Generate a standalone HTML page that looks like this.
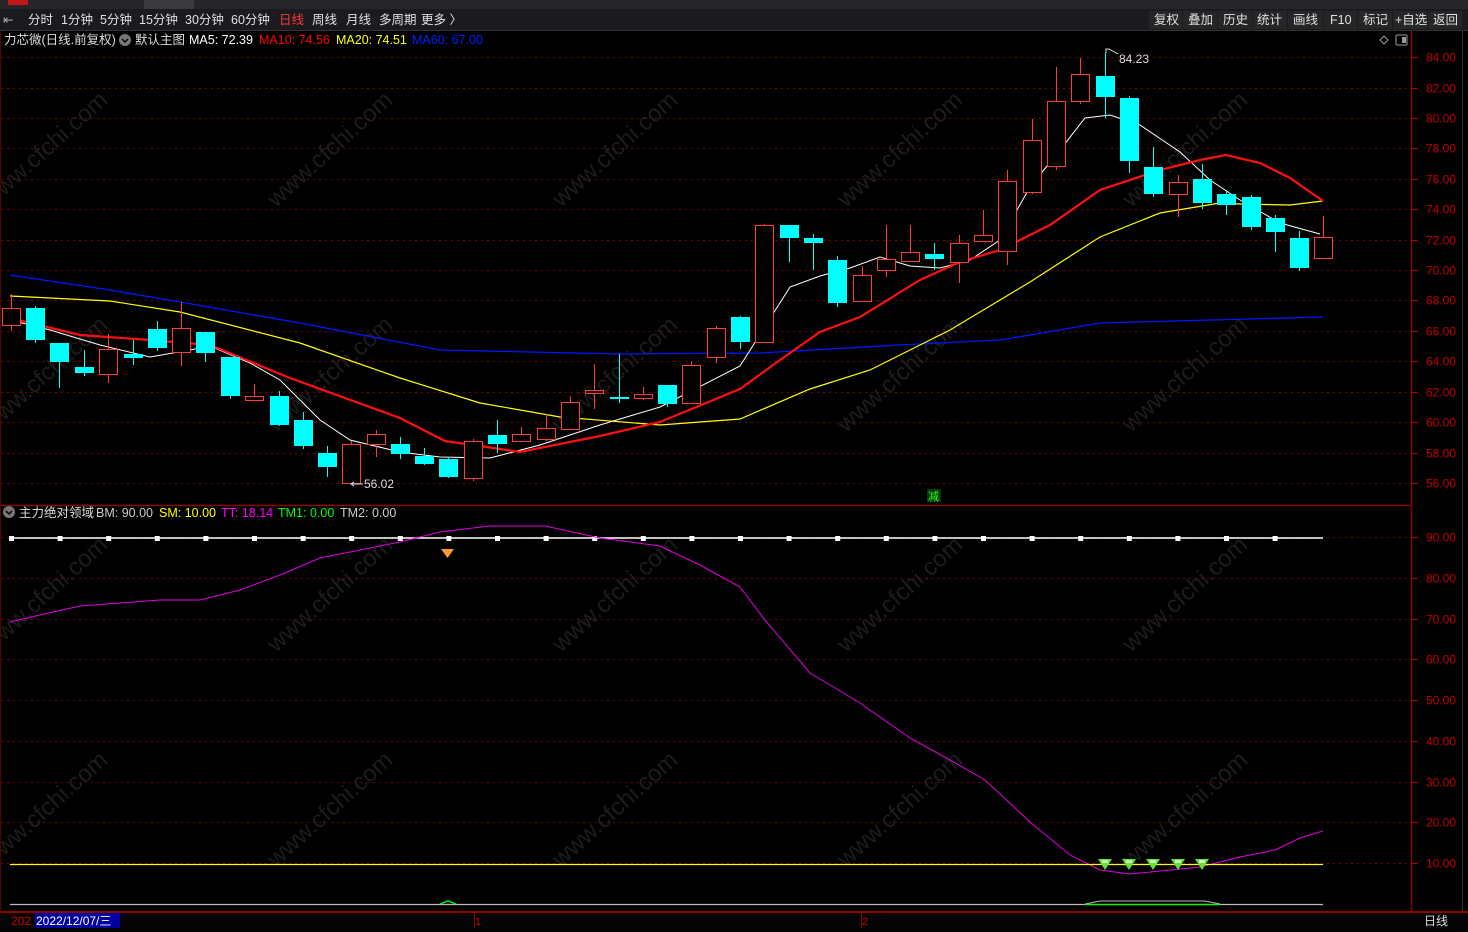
<!DOCTYPE html>
<html><head><meta charset="utf-8"><style>
html,body{margin:0;padding:0;background:#000;width:1468px;height:932px;overflow:hidden;font-family:"Liberation Sans","Noto Sans CJK SC",sans-serif;}
svg text{font-family:"Liberation Sans","Noto Sans CJK SC",sans-serif;}
</style></head><body>
<svg id="s" width="1468" height="932" xmlns="http://www.w3.org/2000/svg">
<rect width="1468" height="932" fill="#000"/>
<g id="wm" font-size="24" fill="#1c1c1c"></g>
<rect x="0" y="0" width="1468" height="9" fill="#26262a"/>
<rect x="8" y="0" width="20" height="5" fill="#c01818"/>
<rect x="144" y="0" width="50" height="9" fill="#3a3a3e"/>
<rect x="0" y="9" width="1468" height="21" fill="#1b1b1f"/>
<g font-size="12.5" fill="#e0e0e0">
<text x="3" y="24" fill="#aaa">⇤</text>
<text x="28" y="24">分时</text><text x="61" y="24">1分钟</text><text x="100" y="24">5分钟</text><text x="139" y="24">15分钟</text><text x="185" y="24">30分钟</text><text x="231" y="24">60分钟</text><text x="279" y="24" fill="#ff3a3a">日线</text><text x="312" y="24">周线</text><text x="346" y="24">月线</text><text x="379" y="24">多周期</text><text x="421" y="24">更多 〉</text>
</g>
<g font-size="12.5" fill="#e0e0e0">
<rect x="1149" y="11" width="33" height="18" fill="#262629"/><text x="1154" y="24">复权</text>
<rect x="1183" y="11" width="34" height="18" fill="#262629"/><text x="1188" y="24">叠加</text>
<rect x="1218" y="11" width="34" height="18" fill="#262629"/><text x="1223" y="24">历史</text>
<rect x="1253" y="11" width="34" height="18" fill="#262629"/><text x="1257" y="24">统计</text>
<rect x="1288" y="11" width="35" height="18" fill="#262629"/><text x="1293" y="24">画线</text>
<rect x="1324" y="11" width="33" height="18" fill="#262629"/><text x="1330" y="24">F10</text>
<rect x="1358" y="11" width="34" height="18" fill="#262629"/><text x="1363" y="24">标记</text>
<rect x="1393" y="11" width="34" height="18" fill="#262629"/><text x="1395" y="24">+自选</text>
<rect x="1428" y="11" width="34" height="18" fill="#262629"/><text x="1433" y="24">返回</text>
</g>
<line x1="0" y1="30.5" x2="1468" y2="30.5" stroke="#333"/>
<g font-size="12.5">
<text x="4" y="44" fill="#ddd">力芯微(日线.前复权)</text>
<circle cx="125" cy="40" r="6" fill="#777"/><path d="M122 39l3 3 3-3" stroke="#000" stroke-width="1.5" fill="none"/>
<text x="135" y="44" fill="#ddd">默认主图</text>
<text x="189" y="44" fill="#fff">MA5: 72.39</text>
<text x="259" y="44" fill="#f00">MA10: 74.56</text>
<text x="336" y="44" fill="#ff0">MA20: 74.51</text>
<text x="412" y="44" fill="#0020ff">MA60: 67.00</text>
</g>
<path d="M1384 36l4 4-4 4-4-4z" stroke="#999" fill="none"/>
<rect x="1396" y="35" width="11" height="10" stroke="#999" fill="none" rx="1"/><rect x="1402" y="37" width="4" height="6" fill="#999"/>
<line x1="1411.5" y1="31" x2="1411.5" y2="912" stroke="#8a0000" stroke-width="1.5"/>
<line x1="1462.5" y1="31" x2="1462.5" y2="932" stroke="#333"/>
<line x1="0" y1="505.5" x2="1411" y2="505.5" stroke="#8a0000" stroke-width="1.5"/>
<line x1="0" y1="912" x2="1468" y2="912" stroke="#8a0000" stroke-width="2"/>
<line x1="0.5" y1="31" x2="0.5" y2="912" stroke="#5a0000"/>
<g id="grid"></g>
<g id="lines" fill="none"></g>
<g id="candles"></g>
<text x="1119" y="63" font-size="12" fill="#ddd">84.23</text>
<path d="M1106 53v-4h3l9 5" stroke="#ddd" fill="none"/>
<text x="364" y="488" font-size="12" fill="#ddd">56.02</text>
<path d="M351 484h12" stroke="#ddd"/><path d="M354 482l-3 2 3 2" stroke="#ddd" fill="none"/>
<rect x="927" y="489" width="14" height="13" fill="#0a3a0a"/><text x="928" y="500" font-size="11" fill="#2f2">减</text>
<g font-size="12.5">
<circle cx="9" cy="512" r="6" fill="#777"/><path d="M6 511l3 3 3-3" stroke="#000" stroke-width="1.5" fill="none"/>
<text x="19" y="517" fill="#ddd">主力绝对领域</text>
<text x="96" y="517" fill="#ccc">BM: 90.00</text>
<text x="159" y="517" fill="#ff0">SM: 10.00</text>
<text x="221" y="517" fill="#f0f">TT: 18.14</text>
<text x="278" y="517" fill="#0f0">TM1: 0.00</text>
<text x="340" y="517" fill="#ccc">TM2: 0.00</text>
</g>
<rect x="0" y="913" width="1468" height="19" fill="#050505"/>
<text x="11" y="925" font-size="12" fill="#c00">202</text>
<rect x="35" y="913" width="85" height="15" fill="#0000a0"/>
<text x="36" y="925" font-size="12" fill="#fff">2022/12/07/三</text>
<line x1="474.5" y1="913" x2="474.5" y2="928" stroke="#800"/><text x="475" y="925" font-size="11" fill="#c00">1</text>
<line x1="861.5" y1="913" x2="861.5" y2="928" stroke="#800"/><text x="862" y="925" font-size="11" fill="#c00">2</text>
<text x="1424" y="925" font-size="12" fill="#ddd">日线</text>
</svg>
<script>
var NS="http://www.w3.org/2000/svg";
function el(p,t,a,txt){var e=document.createElementNS(NS,t);for(var k in a)e.setAttribute(k,a[k]);if(txt)e.textContent=txt;document.getElementById(p).appendChild(e);return e;}
[50,335,620,905,1190].forEach(function(x){[155,380,600,815].forEach(function(y){
el("wm","text",{x:x,y:y,"text-anchor":"middle",transform:"rotate(-42 "+x+" "+y+")"},"www.cfchi.com");});});
for(var p=56;p<=84;p+=2){var y=Math.round(483-(p-56)*15.21)+0.5;
el("grid","line",{x1:1,y1:y,x2:1411,y2:y,stroke:"#7a0000","stroke-dasharray":"2 4"});
el("grid","line",{x1:1411,y1:y,x2:1418,y2:y,stroke:"#a00"});
el("grid","text",{x:1426,y:y+4,"font-size":"12",fill:"#c00000"},p.toFixed(2));}
for(var v=10;v<=90;v+=10){var y=Math.round(863-(v-10)*4.075)+0.5;
el("grid","line",{x1:1,y1:y,x2:1411,y2:y,stroke:"#7a0000","stroke-dasharray":"2 4"});
el("grid","line",{x1:1411,y1:y,x2:1418,y2:y,stroke:"#a00"});
el("grid","text",{x:1426,y:y+4,"font-size":"12",fill:"#c00000"},v.toFixed(2));}
function pl(pts,c,w){el("lines","polyline",{points:pts,stroke:c,"stroke-width":w,fill:"none"});}
pl("10,275 110,290 180,302 300,323 440,350 620,354 760,353 900,345 1000,340 1100,323 1323,317","#0018ff",1.3);
pl("10,296 110,301 180,312 300,343 400,378 480,403 560,417 660,425 740,419 810,389 870,370 950,330 1030,282 1100,237 1160,213 1220,203 1240,204 1290,205 1323,201","#ffff00",1.2);
pl("10,320 50,330 100,345 150,357 190,350 210,346 250,363 280,380 320,420 350,440 400,452 440,457 490,458 540,445 600,425 660,407 740,366 790,287 820,276 850,268 880,257 910,266 940,268 970,260 1000,240 1030,187 1060,150 1085,118 1110,115 1140,125 1180,152 1210,180 1240,200 1280,223 1320,234","#fff",1);
pl("10,318 80,335 150,340 210,345 290,378 400,418 445,441 480,446 520,452 600,436 660,422 740,389 780,360 820,332 860,317 920,280 960,262 1000,250 1050,225 1100,190 1160,170 1200,160 1226,155 1260,163 1290,178 1323,201","#ff1010",2.2);
var C=[[11,308,325,294,331,1],[35,308,340,306,343,0],[59,343,362,343,388,0],[84,367,373,350,376,0],[108,349,374,334,383,1],[133,354,358,340,365,0],[157,329,348,321,351,0],[181,328,352,302,366,1],[205,332,353,332,362,0],[230,357,396,357,399,0],[254,396,400,384,400,1],[279,396,425,391,426,0],[303,420,446,412,449,0],[327,453,467,446,477,0],[351,444,483,441,483,1],[376,434,444,430,457,1],[400,444,454,437,459,0],[424,456,464,448,465,0],[448,459,477,457,478,0],[473,441,478,439,481,1],[497,435,444,420,453,0],[521,434,441,427,441,1],[546,428,439,414,441,1],[570,402,429,396,429,1],[594,390,393,364,409,1],[619,397,399,354,403,0],[643,394,398,387,400,1],[667,385,404,385,407,0],[691,365,403,361,403,1],[716,328,357,326,363,1],[740,317,342,316,349,0],[764,225,342,224,342,1],[789,225,238,225,262,0],[813,238,243,234,270,0],[837,260,303,256,307,0],[862,275,301,266,301,1],[886,259,270,225,277,1],[910,252,261,225,261,1],[934,254,259,243,270,0],[959,243,262,235,283,1],[983,235,241,210,241,1],[1007,181,251,170,265,1],[1032,140,192,119,194,1],[1056,101,166,67,170,1],[1080,74,101,58,104,1],[1105,76,97,53,118,0],[1129,98,161,96,173,0],[1153,167,194,147,197,0],[1178,182,194,175,217,1],[1202,179,203,164,209,0],[1226,194,205,190,215,0],[1251,197,227,195,230,0],[1275,218,232,215,252,0],[1299,238,268,231,271,0],[1323,237,258,216,259,1]];
C.forEach(function(c){var x=c[0],r=c[5];var col=r?"#ff3c3c":"#00ffff";
el("candles","line",{x1:x+0.5,y1:c[3],x2:x+0.5,y2:c[1],stroke:col});
el("candles","line",{x1:x+0.5,y1:c[2],x2:x+0.5,y2:c[4],stroke:col});
if(r)el("candles","rect",{x:x-8.5,y:c[1]+0.5,width:18,height:Math.max(1,c[2]-c[1]),fill:"#000",stroke:col});
else el("candles","rect",{x:x-9,y:c[1],width:19,height:Math.max(2,c[2]-c[1]),fill:col});});
pl("10,538 1323,538","#fff",1.5);
for(var x=11;x<=1323;x+=48.6)el("lines","rect",{x:x-2,y:536,width:5,height:5,fill:"#fff"});
pl("10,622 40,615 80,606 120,603 160,600 200,600 240,590 280,575 320,558 360,550 400,542 440,532 490,526 545,526 600,538 660,546 700,565 740,587 765,620 810,673 860,703 910,738 950,760 985,780 1030,822 1070,855 1100,870 1130,874 1200,867 1240,857 1275,850 1300,838 1323,831","#e000e0",1);
pl("10,864.5 1323,864.5","#ffff00",1.3);
pl("10,904.5 1323,904.5","#bbb",1.3);
pl("440,904 448,901 456,904","#0f0",1.3);
pl("1085,904 1100,901 1205,901 1220,904","#bbb",1);
pl("1085,904.5 1220,904.5","#0f0",1.3);
el("lines","path",{d:"M441 549h13l-6.5 9z",fill:"#ff9a30"});
[1105,1129,1153,1178,1202].forEach(function(x){el("lines","path",{d:"M"+(x-7)+" 859h14l-7 11z",fill:"#5fe03a"});el("lines","rect",{x:x-3,y:860,width:6,height:3,fill:"#c8ffb0"});});
</script>
</body></html>
